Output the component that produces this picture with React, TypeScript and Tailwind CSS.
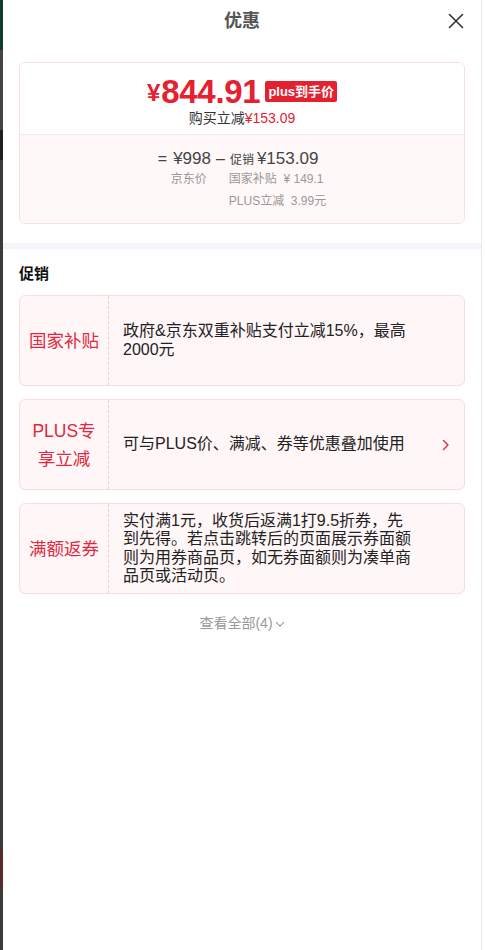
import React from "react";

const font = { fontFamily: '"Liberation Sans", "Noto Sans CJK SC", sans-serif' };

function Chevron({ className }: { className?: string }) {
  return (
    <svg viewBox="0 0 8 12" className={className} fill="none">
      <path d="M1.5 1.5 L6 6 L1.5 10.5" stroke="currentColor" strokeWidth="1.4" strokeLinecap="round" strokeLinejoin="round" />
    </svg>
  );
}

function PromoCard({ label, text, arrow, labelClass }: { label: string; text: string; arrow?: boolean; labelClass?: string }) {
  return (
    <div className="flex rounded-[6px] border border-[#f7dce0] bg-[#fff6f7] min-h-[91px]">
      <div className="w-[89px] shrink-0 flex items-center justify-center border-r border-dashed border-[#f0cdd3] px-[7px]">
        <div className={"text-[17.5px] text-[#e3283d] text-center " + (labelClass ?? "leading-[24px]")}>{label}</div>
      </div>
      <div className="flex-1 flex items-center pl-[14px] pr-[12px]">
        <div className="w-[291px] text-[16px] leading-[18.5px] text-[#222]">{text}</div>
        {arrow && (
          <div className="flex-1 flex justify-end pr-[2px]">
            <Chevron className="w-[8px] h-[12px] text-[#e3283d]" />
          </div>
        )}
      </div>
    </div>
  );
}

export default function App() {
  return (
    <div className="flex w-[485px] h-[950px] bg-white overflow-hidden" style={font}>
      <div className="w-[3px] shrink-0 flex flex-col bg-[#3d3d3d]">
        <div className="h-[50px] bg-[#0f3d2a]" />
        <div className="h-[80px] bg-[#444]" />
        <div className="h-[30px] bg-[#1f1f1f]" />
        <div className="flex-1 bg-[#3b3b3b]" />
        <div className="h-[40px] bg-[#5a2a2a]" />
        <div className="h-[60px] bg-[#3b3b3b]" />
      </div>
      <div className="w-[479px] shrink-0 flex flex-col border-r border-[#ebebeb]">
        <div className="relative h-[42px] flex items-center justify-center">
          <div className="text-[18px] font-bold text-[#555]">优惠</div>
          <button className="absolute right-[17px] top-[13px] w-[16px] h-[16px] text-[#333]">
            <svg viewBox="0 0 16 16" className="w-[16px] h-[16px]" fill="none">
              <path d="M1.5 1.5 L14.5 14.5 M14.5 1.5 L1.5 14.5" stroke="currentColor" strokeWidth="1.6" strokeLinecap="round" />
            </svg>
          </button>
        </div>

        <div className="px-[16px] pt-[20px]">
          <div className="rounded-[6px] border border-[#f8dfe3] overflow-hidden">
            <div className="h-[71px] flex flex-col items-center pt-[10px] bg-white">
              <div className="flex items-center h-[36px]">
                <span className="text-[#e5202f] font-bold text-[24px] leading-none mr-[1px] mt-[4px]">¥</span>
                <span className="text-[#e5202f] font-bold text-[33px] leading-none tracking-[-0.3px]">844.91</span>
                <span className="ml-[5px] mt-[1px] bg-[#e5202f] text-white text-[13px] font-bold leading-[21px] h-[21px] px-[3px] rounded-[2px]">plus到手价</span>
              </div>
              <div className="text-[14px] leading-[18px] text-[#333]">
                购买立减<span className="text-[#e5202f]">¥153.09</span>
              </div>
            </div>
            <div className="h-[89px] bg-[#fff8f8] border-t border-[#f8e6e8] flex justify-center pt-[11px]">
              <div className="flex flex-col">
                <div className="flex items-baseline text-[#444] h-[22px]">
                  <span className="text-[16px] mr-[6px]">=</span>
                  <span className="text-[17px]">¥998</span>
                  <span className="text-[16px] mx-[5px]">–</span>
                  <span className="text-[12px] mr-[3px]">促销</span>
                  <span className="text-[17px]">¥153.09</span>
                </div>
                <div className="flex text-[12px] text-[#999] leading-[22px]">
                  <span className="ml-[13px] w-[58px]">京东价</span>
                  <span>国家补贴&nbsp;&nbsp;¥&nbsp;149.1</span>
                </div>
                <div className="flex text-[12px] text-[#999] leading-[22px]">
                  <span className="ml-[71px]">PLUS立减&nbsp;&nbsp;3.99元</span>
                </div>
              </div>
            </div>
          </div>
        </div>

        <div className="mt-[19px] h-[6px] bg-[#f3f5f9]" />

        <div className="px-[16px]">
          <div className="pt-[15px] text-[15px] font-bold text-[#111] leading-[20px]">促销</div>
          <div className="mt-[11px] flex flex-col gap-[13px]">
            <PromoCard label="国家补贴" text="政府&京东双重补贴支付立减15%，最高2000元" />
            <PromoCard label="PLUS专享立减" labelClass="leading-[28px]" text="可与PLUS价、满减、券等优惠叠加使用" arrow />
            <PromoCard label="满额返券" text="实付满1元，收货后返满1打9.5折券，先到先得。若点击跳转后的页面展示券面额则为用券商品页，如无券面额则为凑单商品页或活动页。" />
          </div>
          <div className="mt-[20px] flex items-center justify-center text-[14px] text-[#999] leading-[18px]">
            <span>查看全部(4)</span>
            <svg viewBox="0 0 12 8" className="w-[10px] h-[7px] ml-[2px] mt-[2px]" fill="none">
              <path d="M1.5 1.5 L6 6 L10.5 1.5" stroke="currentColor" strokeWidth="1.3" strokeLinecap="round" strokeLinejoin="round" />
            </svg>
          </div>
        </div>
      </div>
      <div className="flex-1 bg-white" />
    </div>
  );
}
